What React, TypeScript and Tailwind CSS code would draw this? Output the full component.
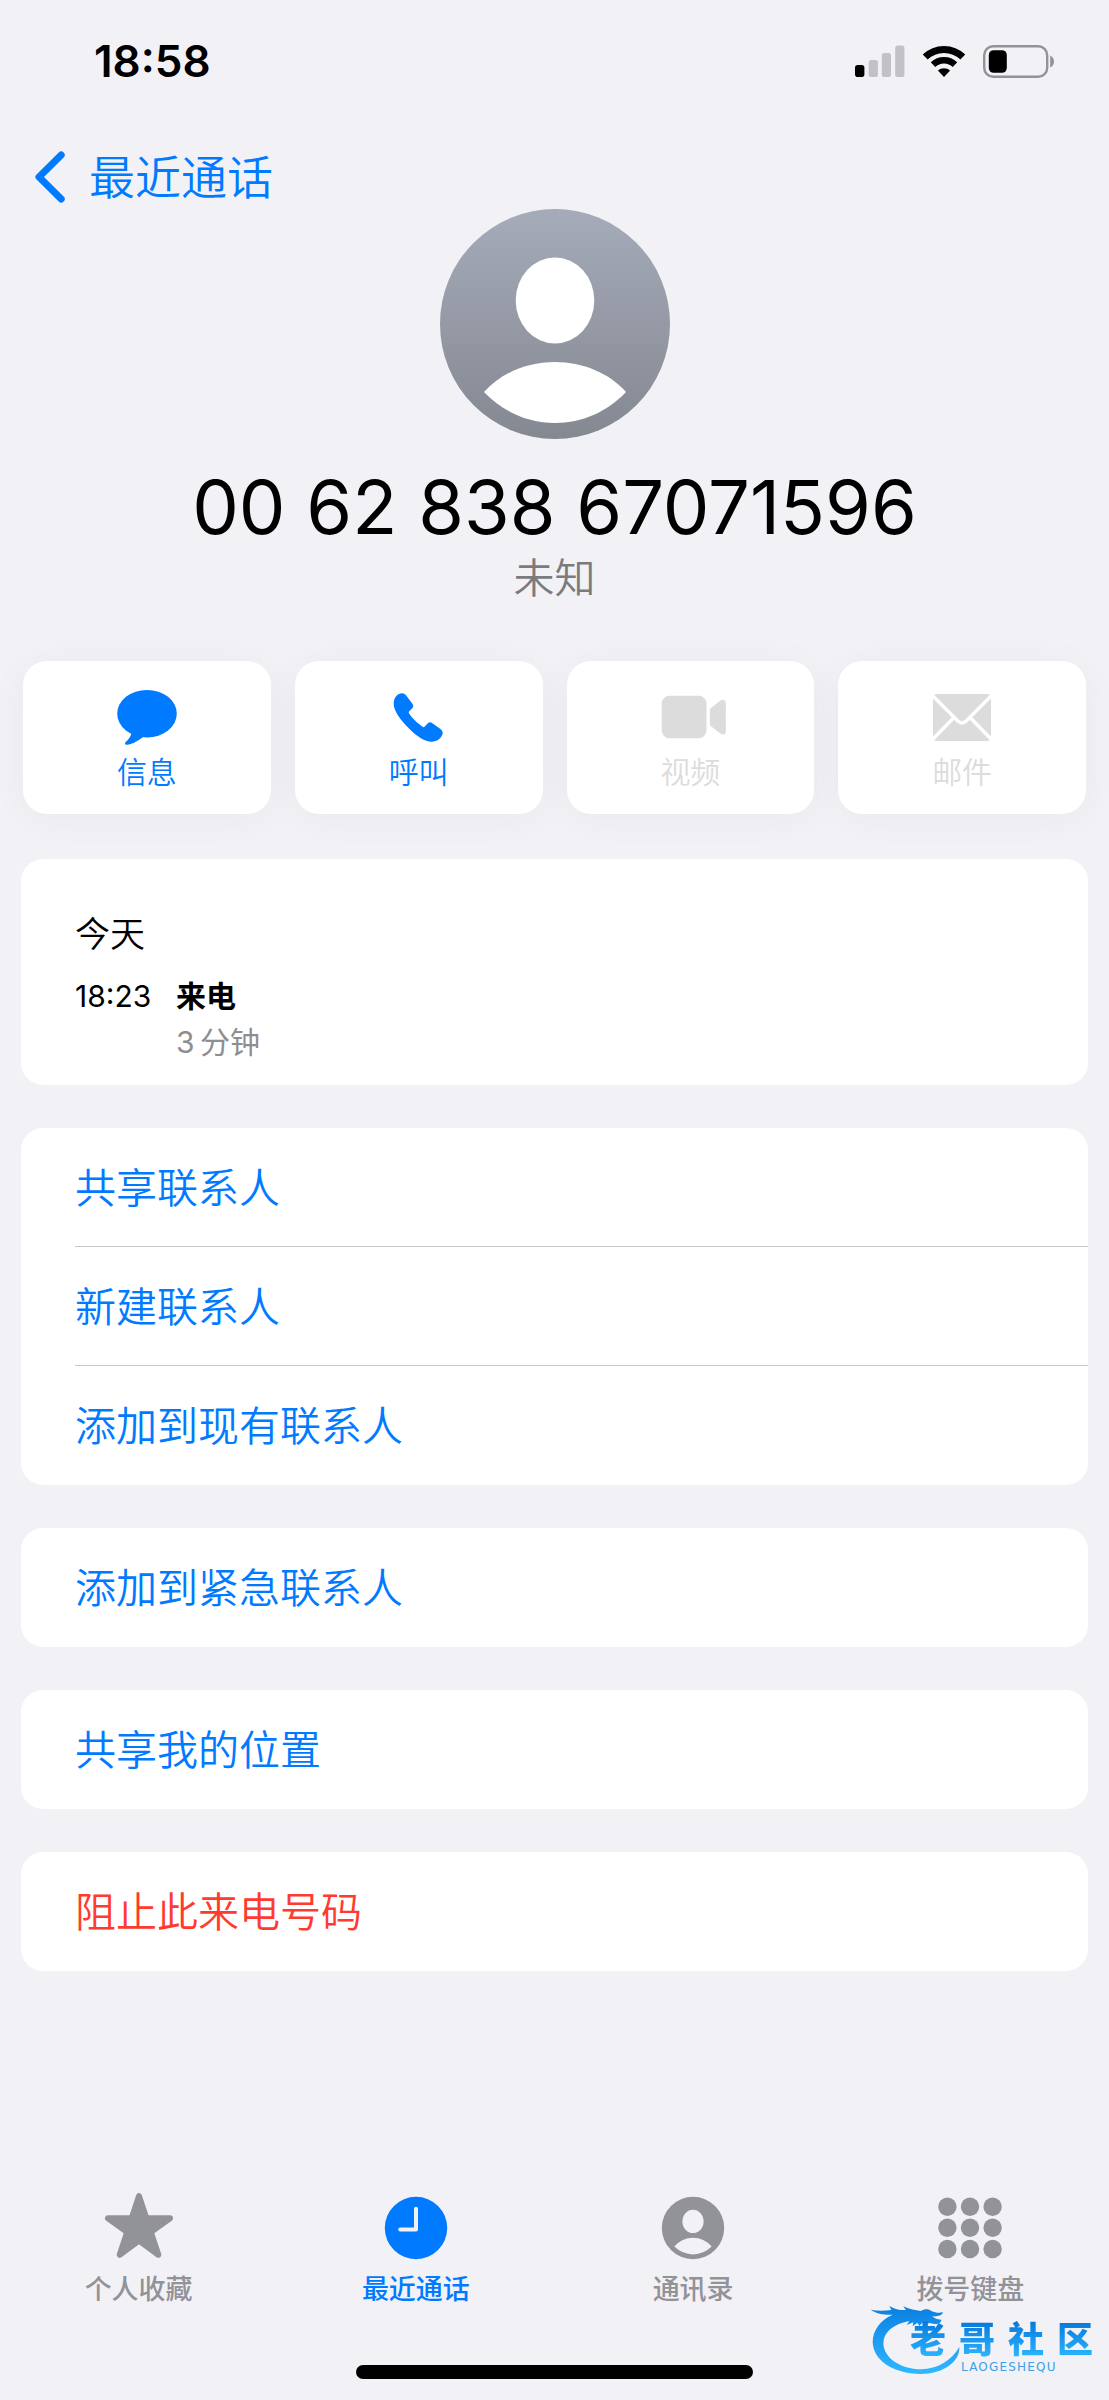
import type { ReactNode } from "react";
import clsx from "clsx";

const actions = [
  { label: "信息", icon: <MessageIcon />, disabled: false },
  { label: "呼叫", icon: <PhoneIcon />, disabled: false },
  { label: "视频", icon: <VideoIcon />, disabled: true },
  { label: "邮件", icon: <MailIcon />, disabled: true },
];

const groups = [
  { items: ["共享联系人", "新建联系人", "添加到现有联系人"], danger: false },
  { items: ["添加到紧急联系人"], danger: false },
  { items: ["共享我的位置"], danger: false },
  { items: ["阻止此来电号码"], danger: true },
];

const tabs = [
  { label: "个人收藏", icon: <StarIcon />, active: false },
  { label: "最近通话", icon: <ClockIcon />, active: true },
  { label: "通讯录", icon: <ContactIcon />, active: false },
  { label: "拨号键盘", icon: <KeypadIcon />, active: false },
];

/* ── Icons ──────────────────────────────────────────────────── */

function MessageIcon() {
  return (
    <svg viewBox="-6 0 72 60" className="w-[72px] h-[60px]" fill="currentColor" aria-hidden="true">
      <ellipse cx="30" cy="25.7" rx="29.8" ry="23.8" />
      <path d="M14.6 45C13.4 49.6 10.8 52.2 8.6 54C7.4 55.5 8 57.1 10.5 56.7C17 55.8 21.5 52 27 48.5Z" />
    </svg>
  );
}

function PhoneIcon() {
  return (
    <svg viewBox="-6 0 72 60" className="w-[72px] h-[60px]" fill="currentColor" aria-hidden="true">
      <path d="M4.7 16C4.7 9 9 5.3 13 5.3C15 5.3 16.3 6.2 17.4 7.8L23.2 15.6C24.6 17.6 24.6 18.8 23 20.6L20.3 23.3C19.6 24.1 19.6 24.8 20.1 25.6C23 30 28.5 35.5 33.5 38.8C34.3 39.4 35 39.3 35.7 38.6L38.6 35.6C40.2 34 41.5 34 43.4 35.3L51.4 41C53.8 42.8 54.3 45 53 47.6C50.7 52 47 53.7 42.5 53.7C36 53.7 28 48.5 20.5 41C11 31.5 4.7 22.5 4.7 16Z" />
    </svg>
  );
}

function VideoIcon() {
  return (
    <svg viewBox="0 0 72 60" className="w-[72px] h-[60px]" fill="currentColor" aria-hidden="true">
      <rect x="7.7" y="7.7" width="44.8" height="42.6" rx="8" />
      <path d="M55.8 22.5Q55.8 21 57 20L66.4 12.6Q68 11.6 69.6 11.9Q71.8 12.4 71.8 15V43.4Q71.8 46 69.6 46.5Q68 46.8 66.4 45.6L57 38.2Q55.8 37.2 55.8 35.7Z" />
    </svg>
  );
}

function MailIcon() {
  return (
    <svg viewBox="-6 0 72 60" className="w-[72px] h-[60px]" aria-hidden="true">
      <rect x="1" y="6" width="58" height="47" rx="4" fill="currentColor" />
      <path d="M0 7L25.5 32.8Q30 37 34.5 32.8L60 7M0 52L21 30.5M60 52L39 30.5" fill="none" stroke="#fff" strokeWidth="3.4" />
    </svg>
  );
}

function StarIcon() {
  return (
    <svg viewBox="0 0 72 72" className="size-[72px]" fill="currentColor" stroke="currentColor" strokeWidth="6" strokeLinejoin="round" aria-hidden="true">
      <path d="M36 4.2L43.3 26.3L67 26.3L47.8 40.1L55.3 62.8L36 48.7L16.7 62.8L24.2 40.1L5 26.3L28.7 26.3Z" />
    </svg>
  );
}

function ClockIcon() {
  return (
    <svg viewBox="0 0 72 72" className="size-[72px]" aria-hidden="true">
      <circle cx="36" cy="36" r="31.2" fill="currentColor" />
      <path d="M36 16.7V37.5H20.2" fill="none" stroke="#f2f1f6" strokeWidth="4" strokeLinecap="round" strokeLinejoin="round" />
    </svg>
  );
}

function ContactIcon() {
  return (
    <svg viewBox="0 0 72 72" className="size-[72px]" aria-hidden="true">
      <circle cx="36" cy="36" r="31.2" fill="currentColor" />
      <ellipse cx="36" cy="29.4" rx="10.6" ry="11.7" fill="#f2f1f6" />
      <path d="M17.3 54.6Q25 45.8 36 45.8Q47 45.8 54.7 54.6Q46.6 62.4 36 62.4Q25.4 62.4 17.3 54.6Z" fill="#f2f1f6" />
    </svg>
  );
}

function KeypadIcon() {
  const stops = [13.4, 36, 58.6];
  return (
    <svg viewBox="0 0 72 72" className="size-[72px]" fill="currentColor" aria-hidden="true">
      {stops.map((cx) =>
        [14.7, 35.8, 57].map((cy) => <circle key={`${cx}-${cy}`} cx={cx} cy={cy} r="9.2" />)
      )}
    </svg>
  );
}

function SignalIcon() {
  return (
    <svg viewBox="0 0 50 33" className="w-[50px] h-[33px]" fill="#c2c1c6" aria-hidden="true">
      <rect x="0" y="20" width="9.4" height="12" rx="2.8" fill="#000" />
      <rect x="13.7" y="15" width="9.2" height="17" rx="2.6" />
      <rect x="26.8" y="8" width="9.2" height="24" rx="2.6" />
      <rect x="40.2" y="0.6" width="9.2" height="31.4" rx="2.6" />
    </svg>
  );
}

function WifiIcon() {
  return (
    <svg viewBox="0 0 44 33" className="w-[44px] h-[33px]" aria-hidden="true">
      <path d="M3.2 12A27 27 0 0 1 40.8 12" fill="none" stroke="#000" strokeWidth="7" />
      <path d="M11 19.6A16 16 0 0 1 33 19.6" fill="none" stroke="#000" strokeWidth="6.4" />
      <path d="M22 32L15.9 25.6A9 9 0 0 1 28.1 25.6Z" />
    </svg>
  );
}

function BatteryIcon() {
  return (
    <svg viewBox="0 0 72 33" className="w-[72px] h-[33px]" aria-hidden="true">
      <rect x="1.2" y="1.2" width="63" height="30.6" rx="9" fill="none" stroke="#939297" strokeWidth="2.4" />
      <rect x="5.8" y="5.2" width="18" height="22.6" rx="4.8" />
      <path d="M67.2 10.6Q71 12.6 71 16.6T67.2 22.6Z" fill="#939297" />
    </svg>
  );
}

function Avatar() {
  return (
    <svg viewBox="0 0 230 230" className="size-[230px]" role="img" aria-label="头像">
      <defs>
        <linearGradient id="avatar" x1="0" y1="0" x2="0" y2="1">
          <stop offset="0" stopColor="#a5abb9" />
          <stop offset="1" stopColor="#848891" />
        </linearGradient>
      </defs>
      <circle cx="115" cy="115" r="115" fill="url(#avatar)" />
      <ellipse cx="115" cy="91.5" rx="39.3" ry="43" fill="#fff" />
      <path d="M44 183C61 164 87 153 115 153C143 153 169 164 186 183C167 203 142 214 115 214C88 214 63 203 44 183Z" fill="#fff" />
    </svg>
  );
}

function DragonMark() {
  return (
    <svg viewBox="60 30 279 225" className="w-[93px] h-[75px]" aria-hidden="true">
      <defs>
        <linearGradient id="dragon" x1="0" y1="0" x2="0" y2="1">
          <stop offset="0" stopColor="#0a7fe2" />
          <stop offset="1" stopColor="#2fb8ff" />
        </linearGradient>
      </defs>
      <path
        fill="url(#dragon)"
        d="M62 56C80 60 100 60 124 57L118 45C136 56 152 58 168 57L160 46C180 55 196 58 212 60C226 52 236 54 244 60C256 66 268 66 279 64C277 74 262 77 246 76C256 84 266 86 274 86C274 98 258 102 240 96L226 99L219 93L208 105L202 95L188 106L190 94L170 102L178 90C128 100 100 124 100 158C102 200 150 234 214 235C262 234 306 208 328 168C330 212 280 249 212 249C128 248 70 208 68 154C68 118 90 88 128 71C104 72 78 68 62 56Z"
      />
    </svg>
  );
}

/* ── Page pieces ────────────────────────────────────────────── */

function Card({ children }: { children: ReactNode }) {
  return <section className="bg-white rounded-[22px] overflow-hidden">{children}</section>;
}

function StatusBar() {
  return (
    <header className="h-[122px] pl-[94px] pr-[54px] flex items-center justify-between">
      <time className="text-[44px] leading-none font-semibold">18:58</time>
      <div className="flex items-center gap-[17px]">
        <SignalIcon />
        <WifiIcon />
        <BatteryIcon />
      </div>
    </header>
  );
}

function Watermark() {
  return (
    <div className="absolute right-4 bottom-6 w-[223px] h-[75px] pointer-events-none">
      <DragonMark />
      <div className="absolute right-0 top-5 w-[183px]">
        <p className="flex justify-between text-[36px] leading-[38px] font-black">
          {["老", "哥", "社", "区"].map((char) => (
            <span key={char} className="bg-linear-to-b from-[#0678dc] to-[#2fb8ff] bg-clip-text text-transparent">
              {char}
            </span>
          ))}
        </p>
        <p className="pl-[51px] text-[12px] leading-4 tracking-widest font-['DejaVu_Sans',sans-serif] text-[#3c9fe8]">
          LAOGESHEQU
        </p>
      </div>
    </div>
  );
}

export default function App() {
  return (
    <div
      lang="zh-CN"
      className="relative min-h-screen flex flex-col bg-[#f2f1f6] text-black font-['Inter','Noto_Sans_CJK_SC',sans-serif]"
    >
      <StatusBar />

      <nav className="pt-[22px] px-[35px]">
        <a href="#recents" className="inline-flex items-center gap-6 h-[65px] text-[46px] leading-none font-[350] text-[#007aff]">
          <svg viewBox="0 0 30 52" className="w-[30px] h-[52px]" fill="none" stroke="currentColor" strokeWidth="7" strokeLinecap="round" strokeLinejoin="round" aria-hidden="true">
            <path d="M26.2 4L4 26L26.2 48" />
          </svg>
          最近通话
        </a>
      </nav>

      <main className="px-[21px] pb-16">
        <div className="flex flex-col items-center">
          <Avatar />
          <h1 className="mt-6 text-[74px] leading-[88px]">00 62 838 67071596</h1>
          <p className="text-[41px] leading-[54px] font-[350] text-[#7b7b7e]">未知</p>
        </div>

        {/* Quick actions */}
        <div className="mt-14 mx-0.5 grid grid-cols-4 gap-6">
          {actions.map((action) => (
            <button
              key={action.label}
              type="button"
              disabled={action.disabled}
              className={clsx(
                "h-[153px] pt-[27px] flex flex-col items-center gap-0.5 bg-white rounded-[24px] shadow-[0_4px_40px_rgba(0,0,0,0.04)]",
                action.disabled ? "text-[#dcdcdc]" : "text-[#007aff]"
              )}
            >
              {action.icon}
              <span className="text-[30px] leading-[44px] font-[350]">{action.label}</span>
            </button>
          ))}
        </div>

        <div className="mt-[45px] flex flex-col gap-[43px]">
          {/* Call log */}
          <Card>
            <div className="pl-[54px] pt-[50px] pb-[20px]">
              <h2 className="text-[35px] leading-[50px] font-[350]">今天</h2>
              <div className="mt-[14px] grid grid-cols-[101px_1fr] text-[30px] leading-[46px]">
                <time>18:23</time>
                <div>
                  <p className="font-bold">来电</p>
                  <p className="text-[#8e8e90]">3&thinsp;分钟</p>
                </div>
              </div>
            </div>
          </Card>

          {groups.map((group) => (
            <Card key={group.items[0]}>
              <ul className="pl-[54px] divide-y divide-[#c9c9cb]">
                {group.items.map((item) => (
                  <li key={item} className="h-[119px]">
                    <button
                      type="button"
                      className={clsx(
                        "size-full pt-0.5 text-left text-[41px] leading-none font-[350]",
                        group.danger ? "text-[#ff3b30]" : "text-[#007aff]"
                      )}
                    >
                      {item}
                    </button>
                  </li>
                ))}
              </ul>
            </Card>
          ))}
        </div>
      </main>

      {/* Tab bar */}
      <footer className="mt-auto pb-[21px]">
        <nav className="grid grid-cols-4">
          {tabs.map((tab) => (
            <a
              key={tab.label}
              href={`#${tab.label}`}
              className={clsx(
                "flex flex-col items-center gap-2 text-[27px] leading-9 font-medium",
                tab.active ? "text-[#007aff]" : "text-[#929299]"
              )}
            >
              {tab.icon}
              {tab.label}
            </a>
          ))}
        </nav>
        <div className="mt-[57px] mx-auto w-[397px] h-3.5 rounded-full bg-black" />
      </footer>

      <Watermark />
    </div>
  );
}
